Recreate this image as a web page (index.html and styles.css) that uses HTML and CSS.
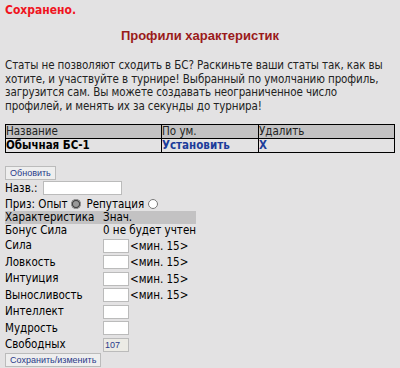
FILE: index.html
```html
<!DOCTYPE html>
<html lang="ru">
<head>
    <meta charset="UTF-8">
    <title>Профили характеристик</title>
    <link rel="stylesheet" href="styles.css">
</head>
<body>
    <div class="saved">Сохранено.</div>
    <h3 class="title">Профили характеристик</h3>

    <p class="intro">Статы не позволяют сходить в БС? Раскиньте ваши статы так, как вы хотите, и участвуйте в турнире! Выбранный по умолчанию профиль, загрузится сам. Вы можете создавать неограниченное число профилей, и менять их за секунды до турнира!</p>

    <!-- Profiles list -->
    <table class="profiles">
        <tr class="head">
            <td class="c-name">Название</td>
            <td class="c-def">По ум.</td>
            <td>Удалить</td>
        </tr>
        <tr>
            <td class="c-name"><b>Обычная БС-1</b></td>
            <td class="c-def"><a href="#">Установить</a></td>
            <td><a href="#">X</a></td>
        </tr>
    </table>

    <button class="btn refresh">Обновить</button>

    <!-- Profile form -->
    <form class="profile-form">
        <div class="line">Назв.: <input type="text" class="name-input"></div>
        <div class="line prize">Приз: Опыт <input type="radio" name="prize" checked> Репутация <input type="radio" name="prize"></div>
        <table class="stats">
            <tr class="head">
                <td class="s-label">Характеристика</td>
                <td>Знач.</td>
            </tr>
            <tr class="bonus"><td class="s-label">Бонус Сила</td><td>0 не будет учтен</td></tr>
            <tr><td class="s-label">Сила</td><td><input type="text" class="stat"><span class="min">&lt;мин. 15&gt;</span></td></tr>
            <tr><td class="s-label">Ловкость</td><td><input type="text" class="stat"><span class="min">&lt;мин. 15&gt;</span></td></tr>
            <tr><td class="s-label">Интуиция</td><td><input type="text" class="stat"><span class="min">&lt;мин. 15&gt;</span></td></tr>
            <tr><td class="s-label">Выносливость</td><td><input type="text" class="stat"><span class="min">&lt;мин. 15&gt;</span></td></tr>
            <tr><td class="s-label">Интеллект</td><td><input type="text" class="stat"></td></tr>
            <tr><td class="s-label">Мудрость</td><td><input type="text" class="stat"></td></tr>
            <tr><td class="s-label">Свободных</td><td><input type="text" class="stat free" value="107" readonly></td></tr>
        </table>
        <button type="button" class="btn save">Сохранить/изменить</button>
    </form>
</body>
</html>
```

FILE: styles.css
```css
/* Global styles */
body {
    font-family: "DejaVu Sans Condensed", "DejaVu Sans", Verdana, sans-serif;
    font-size: 11.5px;
    background-color: #e3e2e3;
    color: #000;
    margin: 0;
    padding: 3px 5px;
}

.saved {
    color: #f0141e;
    font-size: 12px;
    font-weight: bold;
    line-height: 15px;
}

.title {
    font-family: "Liberation Sans", Arial, sans-serif;
    color: #9a1a1a;
    font-size: 13px;
    font-weight: bold;
    text-align: center;
    margin: 9px 0 0;
    line-height: 18px;
}

.intro {
    font-size: 11.5px;
    letter-spacing: -0.1px;
    line-height: 13.5px;
    margin: 14px 0 0;
    width: 392px;
    color: #222;
}

/* Profiles table */
.profiles {
    width: 390px;
    border-collapse: collapse;
    border: 1px solid #000;
    margin-top: 11px;
}

.profiles td {
    border: 1px solid #000;
    padding: 0;
    height: 13px;
    line-height: 13px;
    font-size: 11.5px;
}

.profiles .head td {
    background-color: #c3c2c3;
    color: #222;
}

.profiles .c-name {
    width: 155px;
}

.profiles .c-def {
    width: 96px;
}

.profiles a {
    color: #1c3c9a;
    font-weight: bold;
    text-decoration: none;
}

/* Buttons */
.btn {
    font-family: "Liberation Sans", Arial, sans-serif;
    font-size: 9px;
    color: #2a3a8a;
    background-color: #eeeeee;
    border: 1px solid #bbb;
    padding: 0 4px;
    height: 14px;
    line-height: 12px;
    display: block;
}

.refresh {
    margin-top: 13px;
}

/* Profile form */
.profile-form {
    margin: 0;
}

.line {
    display: flex;
    align-items: center;
    height: 16px;
}

.name-input {
    width: 73px;
    height: 10px;
    border: 1px solid #bbb;
    padding: 1px 2px;
    margin: 0 0 0 5px;
    background: #fff;
}

.prize {
    height: 15px;
}

.prize input {
    width: 10px;
    height: 10px;
    margin: 0 5px 0 4px;
    accent-color: #999;
}

.stats {
    border-collapse: collapse;
    table-layout: fixed;
    width: 191px;
    margin-top: 0;
}

.stats td {
    padding: 0;
    height: 16.5px;
    white-space: nowrap;
}

.stats .head td,
.stats .bonus td {
    height: 13px;
    line-height: 13px;
}

.stats .head td {
    background-color: #c3c2c3;
}

.stats .s-label {
    width: 98px;
}

.stat {
    width: 22px;
    height: 10px;
    border: 1px solid #bbb;
    padding: 1px;
    margin: 0;
    background: #fff;
    vertical-align: middle;
    font-size: 9px;
}

.stat.free {
    background-color: #ecebe5;
    color: #2a3a8a;
    font-family: "Liberation Sans", Arial, sans-serif;
}

.min {
    vertical-align: middle;
    margin-left: 1px;
}

.save {
    margin-top: 0;
}
```
